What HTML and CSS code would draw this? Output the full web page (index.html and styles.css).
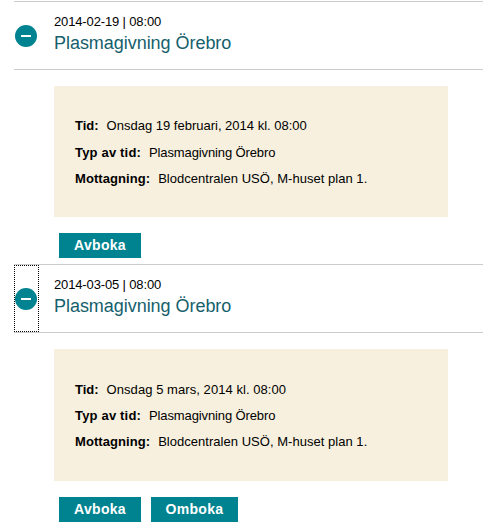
FILE: index.html
```html
<!DOCTYPE html>
<html lang="sv">
<head>
<meta charset="utf-8">
<title>Bokningar</title>
<link rel="stylesheet" href="styles.css">
</head>
<body>
<main class="bookings">
  <article class="booking">
    <header class="head">
      <div class="toggle">
        <svg class="icon" viewBox="0 0 22 22"><circle cx="11" cy="11" r="11"/><path d="M6 10h10v2H6z"/></svg>
      </div>
      <div class="heading">
        <p class="date">2014-02-19 | 08:00</p>
        <h2 class="title">Plasmagivning Örebro</h2>
      </div>
    </header>
    <div class="panel">
      <p class="row row-first"><b>Tid:</b><span>Onsdag 19 februari, 2014 kl. 08:00</span></p>
      <p class="row"><b class="typ">Typ av tid:</b><span class="what">Plasmagivning Örebro</span></p>
      <p class="row"><b class="mott">Mottagning:</b><span class="where">Blodcentralen USÖ, M-huset plan 1.</span></p>
    </div>
    <div class="actions">
      <button class="btn">Avboka</button>
    </div>
  </article>
  <article class="booking">
    <header class="head">
      <div class="toggle focused">
        <svg class="icon" viewBox="0 0 22 22"><circle cx="11" cy="11" r="11"/><path d="M6 10h10v2H6z"/></svg>
      </div>
      <div class="heading">
        <p class="date">2014-03-05 | 08:00</p>
        <h2 class="title">Plasmagivning Örebro</h2>
      </div>
    </header>
    <div class="panel panel-tall">
      <p class="row"><b>Tid:</b><span class="when">Onsdag 5 mars, 2014 kl. 08:00</span></p>
      <p class="row"><b class="typ">Typ av tid:</b><span class="what">Plasmagivning Örebro</span></p>
      <p class="row"><b class="mott">Mottagning:</b><span class="where">Blodcentralen USÖ, M-huset plan 1.</span></p>
    </div>
    <div class="actions">
      <button class="btn">Avboka</button>
      <button class="btn btn-wide">Omboka</button>
    </div>
  </article>
</main>
</body>
</html>
```
FILE: styles.css
```css
* { box-sizing: border-box; }
body {
  margin: 0;
  background: #fff;
  color: #000;
  font-family: "Liberation Sans", Arial, sans-serif;
  font-size: 13px;
  overflow: hidden;
}
p, h2 { margin: 0; }
.bookings { padding: 1px 0 0 14px; }
.booking { padding-bottom: 6px; }
.head {
  display: flex;
  height: 69px;
  border-top: 1px solid #ccc;
  border-bottom: 1px solid #ccc;
}
.toggle {
  display: flex;
  align-items: center;
  width: 25px;
  height: 67px;
  padding-left: 1px;
}
.focused {
  border: 1px dotted #000;
  padding-left: 0;
}
.icon { display: block; flex: none; width: 22px; height: 22px; }
.icon circle { fill: #008390; }
.icon path { fill: #fff; }
.heading { padding: 12px 0 0 15px; }
.date { line-height: 16px; letter-spacing: -0.14px; }
.title {
  color: #15606c;
  font-size: 18px;
  font-weight: normal;
  line-height: 26px;
  letter-spacing: -0.04px;
}
.panel {
  width: 394px;
  height: 131px;
  margin: 16px 0 0 40px;
  padding: 27px 21px 0;
  background: #f7f0de;
}
.panel-tall { height: 132px; padding-top: 28px; }
.row { display: flex; gap: 8px; height: 26px; line-height: 26px; white-space: nowrap; }
.row-first { height: 27px; }
.when { letter-spacing: 0.06px; }
.typ { letter-spacing: 0.18px; }
.what { letter-spacing: -0.12px; }
.mott { letter-spacing: 0.07px; }
.where { letter-spacing: 0.03px; }
.actions { display: flex; gap: 10px; margin: 16px 0 0 45px; }
.btn {
  width: 82px;
  height: 25px;
  padding: 0;
  border: 0;
  background: #008390;
  color: #fff;
  font: bold 14px/25px "Liberation Sans", Arial, sans-serif;
  letter-spacing: 0.3px;
}
.btn-wide { width: 87px; }
```
